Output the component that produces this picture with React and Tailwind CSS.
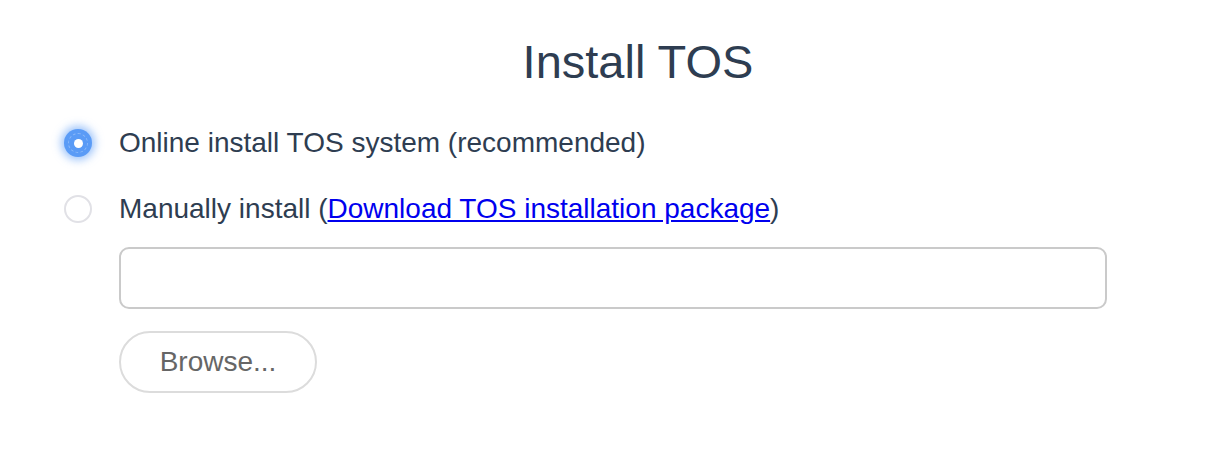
import React, { useState } from "react";

const font = { fontFamily: '"Liberation Sans", Arial, sans-serif' };

const Radio = ({ checked, onClick }) => {
  if (checked) {
    return (
      <button
        type="button"
        onClick={onClick}
        className="relative flex h-[28px] w-[28px] shrink-0 items-center justify-center rounded-full bg-[#5a9bf6] shadow-[0_0_8px_3px_rgba(90,155,246,0.6)]"
      >
        <span className="absolute inset-[4px] rounded-full border border-dashed border-white/30" />
        <span className="h-[9px] w-[9px] rounded-full bg-white" />
      </button>
    );
  }
  return (
    <button
      type="button"
      onClick={onClick}
      className="h-[28px] w-[28px] shrink-0 rounded-full border-2 border-[#e1e1e6] bg-white"
    />
  );
};

const App = () => {
  const [mode, setMode] = useState("online"); // online | manual
  const [file, setFile] = useState("");

  return (
    <div className="min-h-[450px] w-full bg-white pl-[64px] text-[#2e3d51]" style={font}>
      {/* Title */}
      <h1 className="pt-[35px] text-center text-[47px] leading-[54px] font-normal">Install TOS</h1>

      {/* Options */}
      <div className="mt-[34px] flex h-[40px] items-center gap-[27px]">
        <Radio checked={mode === "online"} onClick={() => setMode("online")} />
        <span className="text-[28px] leading-[40px]">Online install TOS system (recommended)</span>
      </div>

      <div className="mt-[26px] flex h-[40px] items-center gap-[27px]">
        <Radio checked={mode === "manual"} onClick={() => setMode("manual")} />
        <span className="text-[28px] leading-[40px]">
          Manually install (
          <a href="#" className="text-[#0000ee] underline">Download TOS installation package</a>)
        </span>
      </div>

      {/* File picker */}
      <div className="pl-[55px]">
        <input
          type="text"
          value={file}
          onChange={(e) => setFile(e.target.value)}
          className="mt-[18px] block h-[62px] w-[988px] rounded-[10px] border-2 border-[#cacaca] px-4 text-[24px] outline-none"
        />
        <button
          type="button"
          className="mt-[22px] h-[62px] w-[198px] rounded-full border-2 border-[#dcdcdc] bg-white text-[28px] text-[#666666]"
        >
          Browse...
        </button>
      </div>
    </div>
  );
};

export default App;
